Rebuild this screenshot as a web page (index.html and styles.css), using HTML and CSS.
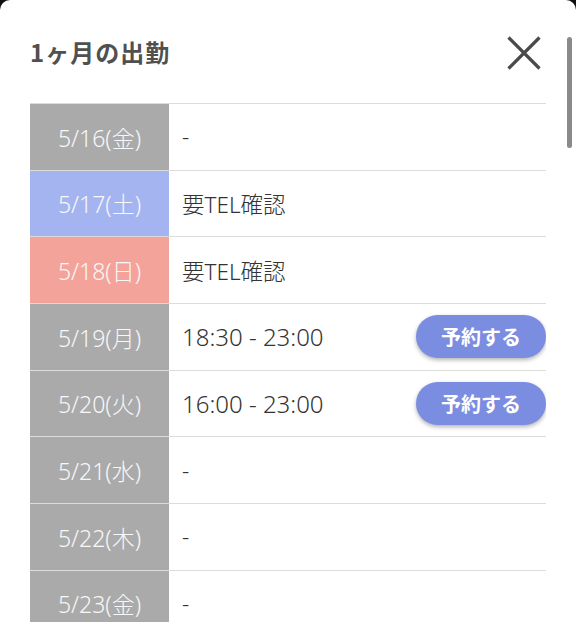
FILE: index.html
```html
<!DOCTYPE html>
<html lang="ja">
<head>
<meta charset="utf-8">
<title>1ヶ月の出勤</title>
<link rel="stylesheet" href="styles.css">
</head>
<body>
<div class="sheet">
  <header class="header">
    <h1 class="title">1ヶ月の出勤</h1>
    <button class="close" aria-label="閉じる">
      <svg width="34" height="34" viewBox="0 0 34 34"><path d="M1.5 1.5 L32.5 32.5 M32.5 1.5 L1.5 32.5" stroke="#4a4a4a" stroke-width="3.2" fill="none"/></svg>
    </button>
  </header>
  <div class="list">
    <div class="row"><div class="date gray">5/16(金)</div><div class="info">-</div></div>
    <div class="row"><div class="date blue">5/17(土)</div><div class="info">要TEL確認</div></div>
    <div class="row"><div class="date red">5/18(日)</div><div class="info">要TEL確認</div></div>
    <div class="row"><div class="date gray">5/19(月)</div><div class="info"><span class="time">18:30 - 23:00</span><button class="reserve">予約する</button></div></div>
    <div class="row"><div class="date gray">5/20(火)</div><div class="info"><span class="time">16:00 - 23:00</span><button class="reserve">予約する</button></div></div>
    <div class="row"><div class="date gray">5/21(水)</div><div class="info">-</div></div>
    <div class="row"><div class="date gray">5/22(木)</div><div class="info">-</div></div>
    <div class="row"><div class="date gray">5/23(金)</div><div class="info">-</div></div>
  </div>
  <div class="thumb"></div>
</div>
</body>
</html>
```

FILE: styles.css
```css
html, body {
  margin: 0;
  padding: 0;
  background: #121012;
}
body {
  font-family: "Noto Sans", "Noto Sans CJK JP", sans-serif;
}
.sheet {
  position: relative;
  background: #ffffff;
  height: 637px;
  border-radius: 10px 10px 0 0;
  padding: 0 30px;
  box-sizing: border-box;
  overflow: hidden;
}
.header {
  height: 103px;
  display: flex;
  align-items: center;
  justify-content: space-between;
}
.title {
  margin: 0;
  font-family: "Noto Sans CJK JP", sans-serif;
  font-size: 24px;
  font-weight: 700;
  color: #505050;
  letter-spacing: 1px;
}
.close {
  border: 0;
  background: none;
  padding: 0;
  margin: 2px 5px 0 0;
  width: 34px;
  height: 34px;
  display: block;
}
.close svg { display: block; }
.list {
  height: 518px;
  overflow: hidden;
  border-top: 1px solid #dcdcdc;
}
.row {
  display: flex;
  height: 66.67px;
  box-sizing: border-box;
  border-bottom: 1.5px solid #dcdcdc;
}
.date {
  width: 139px;
  flex: none;
  display: flex;
  align-items: center;
  justify-content: center;
  color: #f7f7f7;
  font-size: 23px;
  font-weight: 300;
}
.gray { background: #aaaaaa; }
.blue { background: #a4b4f1; }
.red { background: #f4a39b; }
.info {
  flex: 1;
  display: flex;
  align-items: center;
  justify-content: space-between;
  padding-left: 13px;
  color: #333333;
  font-size: 22.5px;
  font-weight: 300;
}
.time {
  font-size: 24px;
  color: #333333;
}
.reserve {
  border: 0;
  width: 130px;
  height: 43px;
  border-radius: 22px;
  background: #7b8de0;
  color: #ffffff;
  font-family: "Noto Sans CJK JP", sans-serif;
  font-size: 20px;
  font-weight: 700;
  box-shadow: 0 2px 4px rgba(0, 0, 0, 0.3);
  padding: 0;
}
.thumb {
  position: absolute;
  top: 37px;
  right: 4px;
  width: 5px;
  height: 111px;
  border-radius: 3px;
  background: #8a8a8a;
}
```
